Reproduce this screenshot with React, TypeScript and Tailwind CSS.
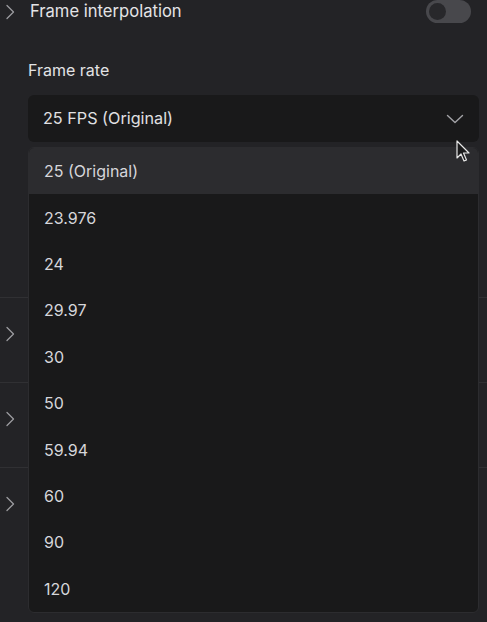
import { useState } from "react";

const rates = ["25 (Original)", "23.976", "24", "29.97", "30", "50", "59.94", "60", "90", "120"];

const ChevronRight = () => (
  <svg width="14" height="22" viewBox="0 0 14 22" fill="none" className="shrink-0">
    <path d="M4 4.5 L10.5 11 L4 17.5" stroke="#9b9b9f" strokeWidth="1.3" strokeLinecap="round" strokeLinejoin="round" />
  </svg>
);

const ChevronDown = () => (
  <svg width="18" height="10" viewBox="0 0 18 10" fill="none">
    <path d="M1.5 1.5 L9 8.5 L16.5 1.5" stroke="#a3a3a7" strokeWidth="1.4" strokeLinecap="round" strokeLinejoin="round" />
  </svg>
);

const Cursor = () => (
  <svg width="16" height="24" viewBox="0 0 16 24" className="absolute left-[456px] top-[140px]">
    <path d="M1 1 L1 18 L5 14 L8 21 L10.5 20 L7.5 13 L13 13 Z" fill="#1b1b1c" stroke="#e8e8e8" strokeWidth="1.2" strokeLinejoin="round" />
  </svg>
);

export default function App() {
  const [selected] = useState(0);
  const [interp] = useState(false);

  return (
    <div className="relative w-[487px] h-[622px] overflow-hidden bg-[#232326] text-[16px] text-[#e2e2e4]" style={{ fontFamily: "Inter, 'Noto Sans', sans-serif" }}>
      {/* Frame interpolation row */}
      <div className="flex items-center h-[23px] pl-[3px] pr-[16px]">
        <ChevronRight />
        <span className="ml-[13px] flex-1 text-[16.6px] leading-[20px] -mt-[2px] text-[#e4e4e6]">Frame interpolation</span>
        <div className={`w-[45px] h-[23px] rounded-full p-[3px] flex ${interp ? "justify-end bg-[#5b5bd6]" : "justify-start bg-[#48484c]"}`}>
          <div className="w-[17px] h-[17px] rounded-full bg-[#28282b]" />
        </div>
      </div>

      {/* Frame rate */}
      <div className="pl-[28px] pr-[8px] pt-[35px]">
        <div className="text-[16px] text-[#e2e2e4] leading-[24px]">Frame rate</div>
        <div className="mt-[13px] h-[47px] rounded-[6px] bg-[#19191a] flex items-center justify-between pl-[15px] pr-[15px]">
          <span className="text-[16.2px] text-[#e0e0e3]">25 FPS (Original)</span>
          <ChevronDown />
        </div>
      </div>

      {/* collapsed sections behind the menu */}
      <div className="mt-[155px]">
        {[0, 1, 2].map((i) => (
          <div key={i} className="h-[85px] border-t border-[#303033] flex items-start pt-[25px] pl-[3px]">
            <ChevronRight />
          </div>
        ))}
      </div>

      {/* open menu */}
      <div className="absolute left-[28px] top-[147px] w-[451px] rounded-[6px] border border-[#2c2c2f] bg-[#19191a] overflow-hidden">
        {rates.map((r, i) => (
          <div
            key={r}
            className={`h-[46.4px] flex items-center pl-[15px] text-[16px] text-[#d6d6da] ${i === selected ? "bg-[#2c2c2f]" : ""}`}
          >
            {r}
          </div>
        ))}
      </div>

      <Cursor />
    </div>
  );
}
